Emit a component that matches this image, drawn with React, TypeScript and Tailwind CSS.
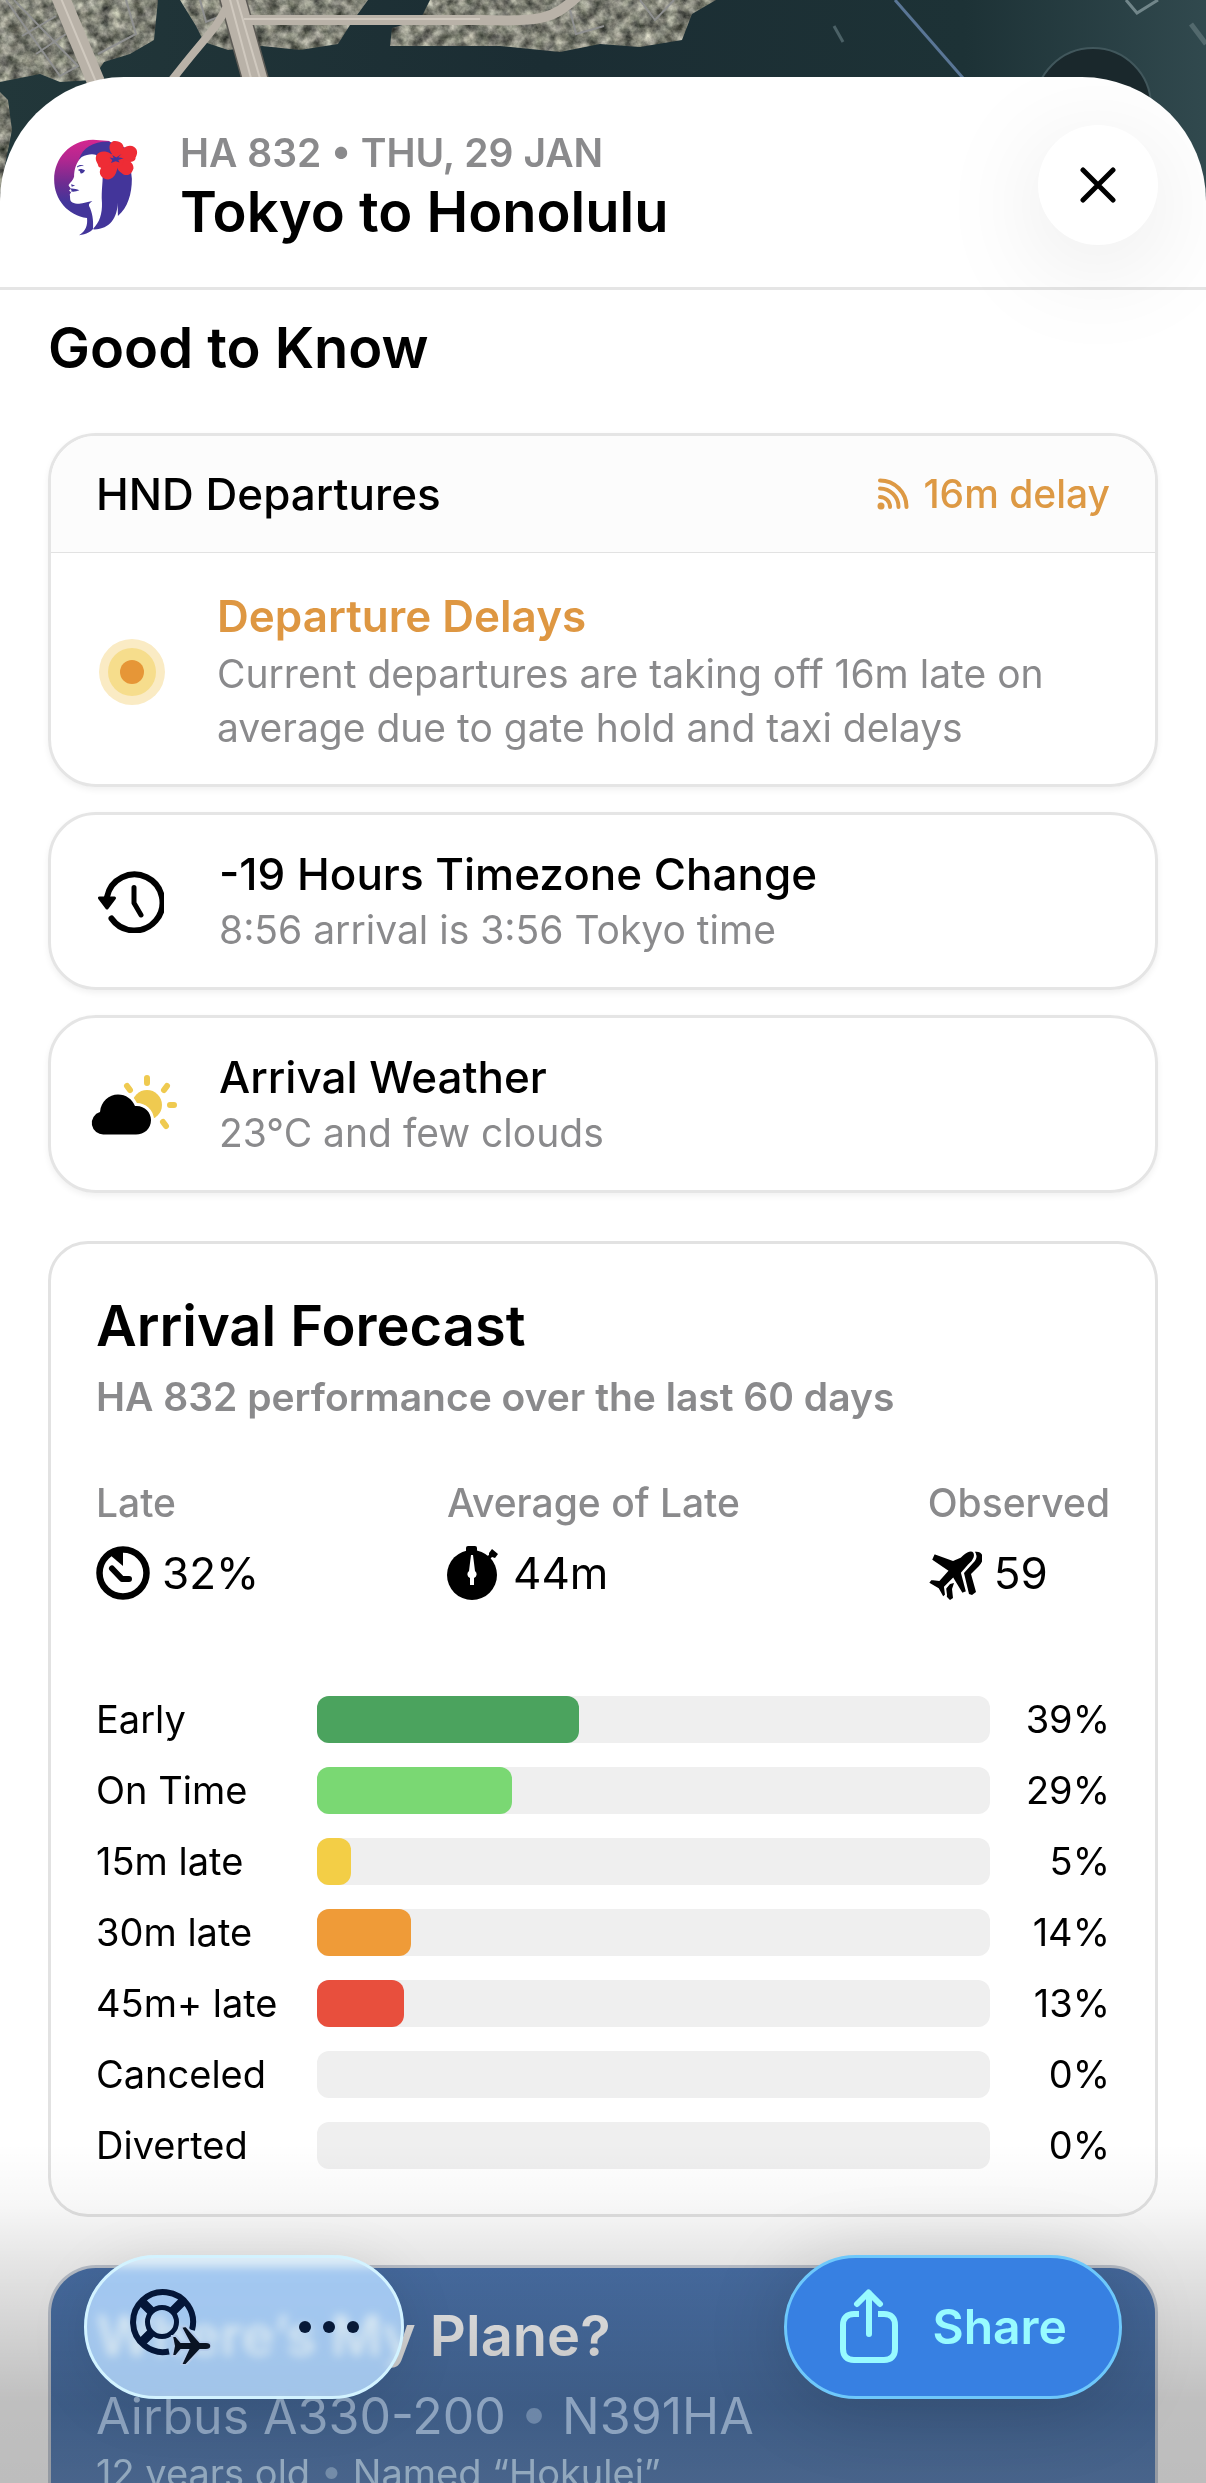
import type { ReactNode } from 'react';

const forecast = [
  { label: 'Early', value: 39, color: 'bg-[#4ba35e]' },
  { label: 'On Time', value: 29, color: 'bg-[#7ad873]' },
  { label: '15m late', value: 5, color: 'bg-[#f3ce46]' },
  { label: '30m late', value: 14, color: 'bg-[#ef9b38]' },
  { label: '45m+ late', value: 13, color: 'bg-[#e84f3d]' },
  { label: 'Canceled', value: 0, color: 'bg-[#efefef]' },
  { label: 'Diverted', value: 0, color: 'bg-[#efefef]' },
];

function MapBackdrop() {
  return (
    <svg
      className="absolute inset-x-0 top-0 h-[260px] w-full"
      viewBox="0 0 1206 260"
      preserveAspectRatio="none"
      aria-hidden="true"
    >
      <defs>
        <linearGradient id="water" x1="0" x2="1" y1="0" y2="0">
          <stop offset="0" stopColor="#22373a" />
          <stop offset="0.45" stopColor="#1b2d33" />
          <stop offset="0.8" stopColor="#1d3236" />
          <stop offset="1" stopColor="#31494e" />
        </linearGradient>
        {/* speckled rooftops */}
        <filter id="city" x="0" y="0" width="1" height="1" colorInterpolationFilters="sRGB">
          <feTurbulence type="fractalNoise" baseFrequency="0.09" numOctaves="4" seed="7" />
          <feColorMatrix values="0.9 0 0 0 0.05  0.88 0.03 0 0 0.05  0.82 0 0.04 0 0.03  0 0 0 0 1" />
          <feComposite in2="SourceGraphic" operator="in" />
        </filter>
      </defs>
      <rect width="1206" height="260" fill="url(#water)" />
      <g filter="url(#city)">
        <path d="M0 0H158L154 40 130 54 104 62 92 80 60 82 40 74 0 82Z" />
        <path d="M180 0H368L352 22 338 44 300 50 262 46 228 50 204 42 196 26Z" />
        <path d="M430 0H716L692 14 682 40 640 47 600 44 560 52 500 46 390 46 392 28 420 20Z" />
        <path d="M0 92 8 100 12 130 0 190Z" />
        <path d="M0 160 6 170 0 240Z" />
      </g>
      <g fill="none" stroke="#8f9090" strokeWidth="2">
        <path d="M6 0 60 76 78 66 14 0M22 36 56 16M36 54 66 34M126 0 136 34 98 54M200 0 206 22 226 14M570 10 576 34 604 26M640 0 655 20 674 0" />
      </g>
      <path d="M232-4 256 82" fill="none" stroke="#5c5a55" strokeWidth="27" />
      <g fill="none" stroke="#b9b2a8">
        <path d="M60-4 96 82" strokeWidth="18" />
        <path d="M226 8C216 30 204 38 172 80" strokeWidth="8" />
        <path d="M232-4 256 82" strokeWidth="24" />
        <path d="M244 20H480C540 22 552 20 578-4" strokeWidth="10" />
      </g>
      <g fill="none" stroke="#d0c9bf" strokeWidth="2">
        <path d="M60-4 96 82M229-4 252 82M236-4 261 82M244 19H480" />
      </g>
      <path d="M895 0 963 78" stroke="#5a7696" strokeWidth="3" />
      <path d="M1126 0 1137 13 1158 0" fill="none" stroke="#71868a" strokeWidth="3" />
      <path d="M834 26 843 42" stroke="#4b6166" strokeWidth="3" />
      <path d="M1191 24 1206 44" stroke="#53696d" strokeWidth="5" />
      <circle cx="1093" cy="106" r="58" fill="#1a282c" stroke="#41575c" strokeWidth="2" />
    </svg>
  );
}

function AirlineLogo() {
  return (
    <svg className="h-[97px] w-[85px] shrink-0" viewBox="70 60 255 292" role="img" aria-label="Hawaiian Airlines">
      <defs>
        <linearGradient id="pualani" x1="0" x2="0" y1="0" y2="1">
          <stop offset="0" stopColor="#d4268f" />
          <stop offset="0.2" stopColor="#b32790" />
          <stop offset="0.45" stopColor="#6f2c91" />
          <stop offset="0.65" stopColor="#43359a" />
        </linearGradient>
      </defs>
      <path
        fill="url(#pualani)"
        d="M190 62C120 64 73 118 73 182c0 62 42 108 99 116 2 22-3 38-24 52 22-3 38-11 46-24l50-120-4-140Z"
      />
      <path
        fill="#43359a"
        d="M240 68c-46-2-82 18-92 54 20-14 44-16 62-8l8 70c-4 50 2 100-28 148 50 2 74-36 74-80l1 40c30-26 42-66 42-112l-10-90Z"
      />
      <path
        fill="#fff"
        d="M156 114c16-8 32-10 44-6 2 12 10 30 18 44 4 34-4 60-1 100 1 32-7 60-27 78 2-24-2-50-12-68-2-6 4-10 10-15-14 2-26 8-40 8-16 0-28-4-27-18 0-6-1-8-1-11l4-5-6-6 5-5c-2-5-8-8-6-12 4-6 14-14 16-24 0-22 6-44 23-60Z"
      />
      <path fill="#43359a" d="M142 143c6-6 14-6 22-1-8-1-14 0-22 4ZM144 153c8-4 14-3 22 2-4 6-8 10-13 9l-3-8ZM121 210c8-2 18 1 28 4-9 4-20 6-26 3l3-3ZM124 196l12 4-10 4Z" />
      <g fill="#ee2c35">
        <path d="M262 118C232 98 236 72 252 66c20-2 34 10 30 28 4 14-6 24-20 24Z" />
        <path d="M264 118c10-34 34-44 50-34 14 10 8 24 4 32 2 16-30 20-54 2Z" />
        <path d="M262 122c32-4 50 8 50 26-6 22-24 26-36 14-14-6-18-24-14-40Z" />
        <path d="M260 122c10 30-4 58-24 60-18 0-30-16-24-30 6-18 26-26 48-30Z" />
        <path d="M258 120c-20 28-44 32-52 22 0-8-12-16-6-32 10-20 44-16 58 10Z" />
        <circle cx="261" cy="122" r="22" />
      </g>
      <path fill="#43359a" d="m276 105-10 10 16 3-16 5 4 8-12-4-14 5 4-8-8-8 12 2-4-10 12 8Z" />
    </svg>
  );
}

function CloseIcon() {
  return (
    <svg className="size-9" viewBox="0 0 36 36" fill="none" stroke="#000" strokeWidth="5" strokeLinecap="round" aria-hidden="true">
      <path d="M3 3 33 33M33 3 3 33" />
    </svg>
  );
}

function SignalIcon() {
  return (
    <svg className="size-8" viewBox="0 0 32 32" fill="none" stroke="currentColor" strokeWidth="4" strokeLinecap="round" aria-hidden="true">
      <circle cx="4" cy="28" r="3.500" fill="currentColor" stroke="none" />
      <path d="M3 19A10 10 0 0 1 13 29M3 10.500A18.500 18.500 0 0 1 21.500 29M3 2.500A26.500 26.500 0 0 1 29.500 29" />
    </svg>
  );
}

function PulseIcon() {
  return (
    <svg className="size-[66px]" viewBox="0 0 66 66" aria-hidden="true">
      <circle cx="33" cy="33" r="33" fill="#faebc4" />
      <circle cx="33" cy="33" r="24" fill="#f6dd8c" />
      <circle cx="33" cy="33" r="12" fill="#e69637" />
    </svg>
  );
}

function TimezoneIcon() {
  return (
    <svg className="h-[62px] w-[66px]" viewBox="0 0 66 62" fill="none" stroke="#000" strokeLinecap="round" strokeLinejoin="round" aria-hidden="true">
      <path d="M9 26A28 28 0 1 1 13.500 47.500" strokeWidth="6" />
      <path d="M36 16.500V32L43 44" strokeWidth="5" />
      <path d="M1.500 27H16.500L9 37Z" fill="#000" strokeWidth="3" />
    </svg>
  );
}

function WeatherIcon() {
  return (
    <svg className="h-[62px] w-24" viewBox="-8 0 96 62" aria-hidden="true">
      <g stroke="#efca50" strokeWidth="6" strokeLinecap="round">
        <path d="M56 4V9M36 12 39 16M76 12 73 16M79 31H83M72 48 75 52" />
      </g>
      <circle cx="56" cy="31" r="15" fill="#efca50" />
      <path
        d="M13 60.500a12 12 0 0 1-3-22.500C11 27 19 20 27 20c8 0 14 5 17 12 9-1 16 6 16 14 0 9-7 14.500-15 14.500Z"
        stroke="#fff"
        strokeWidth="6"
      />
      <path d="M13 60.500a11.500 11.500 0 0 1-4-22.500C10 27 18 20.500 27 20.500c8 0 14 4.500 17 11.500 9-1 16 6 16 14 0 9-7 14.500-15 14.500Z" />
    </svg>
  );
}

function LateIcon() {
  return (
    <svg className="size-[54px]" viewBox="0 0 54 54" fill="none" stroke="#000" aria-hidden="true">
      <circle cx="27" cy="27" r="23.500" strokeWidth="6.500" />
      <path d="M27 4V20L14 9Z" fill="#000" stroke="none" />
      <path d="M16 22.500 26 33H33" strokeWidth="6" strokeLinecap="round" strokeLinejoin="round" />
    </svg>
  );
}

function StopwatchIcon() {
  return (
    <svg className="size-[54px]" viewBox="0 0 54 54" aria-hidden="true">
      <circle cx="25" cy="29" r="25" />
      <rect x="19" y="0" width="11" height="7" rx="2" />
      <path d="m42 7 3-4 6 5-3 4-3-1-3 3-3-3 3-2Z" />
      <path d="M24 9h2l2 16a4 4 0 0 1-1 7v7h-4v-7a4 4 0 0 1-1-7Z" fill="#fff" />
    </svg>
  );
}

function PlanesIcon() {
  return (
    <svg className="size-[54px]" viewBox="0 0 54 54" aria-hidden="true">
      <path d="M46 6C56 4 57 14 51 20L43 28 48 46 44 49 41 48 36 27 45 17C49 13 50 9 46 6Z" />
      <path d="M26 37 24 43 25 52 22 54 19 51 17 44 22 38Z" />
      <path
        stroke="#fff"
        strokeWidth="2"
        d="M32 11c7-7 12-8 14-5 2 3 1 8-5 13l-7 8 5 19-5 2-9-15-8 8 1 8-3 3-5-9-10-6 3-4 8 1 8-9L3 14l3-7 19 7Z"
      />
    </svg>
  );
}

function SupportIcon() {
  return (
    <svg className="h-[76px] w-[82px]" viewBox="0 0 82 76" fill="none" stroke="#041638" aria-hidden="true">
      <path d="M63 41A30 30 0 1 0 40 62.500" strokeWidth="6" />
      <circle cx="33" cy="33" r="14.500" strokeWidth="5" />
      <path d="M12 12 23 23M54 12 43 23M12 54 23 43" strokeWidth="9" />
      <path
        fill="#0a1322"
        stroke="#b4cbea"
        strokeWidth="2"
        d="M43 47h4l5 6h8l-8-15 5-1 14 16h6c7 0 7 8 0 8h-6L57 76h-5l7-15h-7l-5 6h-4l2-10Z"
      />
    </svg>
  );
}

function ShareIcon() {
  return (
    <svg className="h-[76px] w-[60px]" viewBox="0 0 60 76" fill="none" stroke="currentColor" strokeWidth="6" aria-hidden="true">
      <path d="M20 25H15C8 25 4 29 4 36V60C4 67 8 71 15 71H45C52 71 56 67 56 60V36C56 29 52 25 45 25H39" />
      <path d="M30 45V4M18 15 29.500 3.500 41 15" strokeLinecap="round" strokeLinejoin="round" />
    </svg>
  );
}

function InfoCard({ icon, title, text }: { icon: ReactNode; title: string; text: string }) {
  return (
    <article className="flex items-center rounded-[48px] border-[3px] border-[#e5e5e5] pt-8 pb-[30px] shadow-[0_3px_6px_rgba(0,0,0,0.06)]">
      <div className="flex w-[168px] shrink-0 justify-center pr-2">{icon}</div>
      <div>
        <h3 className="text-[44px] leading-[54px] font-medium">{title}</h3>
        <p className="mt-0.5 text-[39px] leading-[54px] text-[#8a8a8c]">{text}</p>
      </div>
    </article>
  );
}

function Stat({ label, value, icon }: { label: string; value: string; icon: ReactNode }) {
  return (
    <div>
      <dt className="text-[39px] leading-[54px] font-medium text-[#8a8a8c]">{label}</dt>
      <dd className="mt-4 flex items-center gap-3 text-[44px] leading-[54px]">
        {icon}
        {value}
      </dd>
    </div>
  );
}

function ArrivalForecast() {
  return (
    <section className="mt-12 rounded-[40px] border-[3px] border-[#e2e2e2] px-[45px] pt-12 pb-[33px]">
      <h2 className="text-[56px] leading-[68px] font-semibold">Arrival Forecast</h2>
      <p className="mt-2.5 text-[39px] leading-[54px] font-semibold text-[#8a8a8c]">
        HA 832 performance over the last 60 days
      </p>

      <dl className="mt-[52px] flex justify-between">
        <Stat label="Late" value="32%" icon={<LateIcon />} />
        <Stat label="Average of Late" value="44m" icon={<StopwatchIcon />} />
        <Stat label="Observed" value="59" icon={<PlanesIcon />} />
      </dl>

      <table className="mt-[84px] w-full table-fixed text-[38px] leading-[47px]">
        <colgroup>
          <col className="w-[221px]" />
          <col />
          <col className="w-[120px]" />
        </colgroup>
        <tbody>
          {forecast.map((row) => (
            <tr key={row.label} className="h-[71px]">
              <th scope="row" className="p-0 text-left font-normal whitespace-nowrap">{row.label}</th>
              <td className="p-0">
                <div className="h-[47px] rounded-xl bg-[#efefef]">
                  <div className={`h-full rounded-xl ${row.color}`} style={{ width: `${row.value}%` }} />
                </div>
              </td>
              <td className="p-0 text-right">{row.value}%</td>
            </tr>
          ))}
        </tbody>
      </table>
    </section>
  );
}

function PlaneCard() {
  return (
    <section className="mt-12 rounded-t-[48px] border-[3px] border-b-0 border-[#c8cfda] bg-[linear-gradient(to_bottom,#4c74ad_0px,#527bb3_140px,#6388bc_220px)] px-[45px] pt-[34px] pb-40">
      <h2 className="text-[56px] leading-[68px] font-semibold text-white">Where’s My Plane?</h2>
      <p className="mt-4 text-[50px] leading-[60px] text-[#bcdaff]">
        Airbus A330-200 <span className="opacity-60">•</span> N391HA
      </p>
      <p className="text-[38px] leading-[54px] text-[#c4e2ff]">
        12 years old <span className="opacity-60">•</span> Named “Hokulei”
      </p>
    </section>
  );
}

function ActionBar() {
  return (
    <div className="absolute inset-x-0 bottom-0">
      <div
        className="h-[340px] bg-[linear-gradient(to_bottom,rgba(0,0,0,0)_0%,rgba(0,0,0,0.03)_18%,rgba(0,0,0,0.1)_35%,rgba(0,0,0,0.18)_57%,rgba(0,0,0,0.25)_76%,rgba(0,0,0,0.26)_100%)]"
        aria-hidden="true"
      />
      <div className="absolute inset-x-[84px] bottom-[84px] flex items-center justify-between">
        <div className="flex h-36 items-center rounded-full border-[3px] border-[#d3f3ff] bg-[#d9f0ff]/70 px-[42px] shadow-[0_8px_60px_rgba(0,0,0,0.1)] backdrop-blur-[5px] backdrop-saturate-200">
          <button type="button" aria-label="Support">
            <SupportIcon />
          </button>
          <button type="button" aria-label="More" className="ml-[88px] flex gap-3 py-8">
            <span className="size-3 rounded-full bg-[#081a38]" />
            <span className="size-3 rounded-full bg-[#081a38]" />
            <span className="size-3 rounded-full bg-[#081a38]" />
          </button>
        </div>
        <button
          type="button"
          className="flex h-36 items-center gap-[33px] rounded-full border-[3px] border-[#6ec8fb] bg-[#3780e2] px-[52px] text-[48px] leading-[60px] font-semibold text-[#98fbff] shadow-[0_8px_80px_rgba(0,0,0,0.18)]"
        >
          <ShareIcon />
          Share
        </button>
      </div>
    </div>
  );
}

export default function App() {
  return (
    <div className="relative flex h-screen flex-col overflow-hidden bg-white pt-[77px] font-['Inter',sans-serif] text-black">
      <MapBackdrop />

      <main className="relative min-h-0 flex-1 overflow-hidden rounded-t-[124px] bg-white">
        <header className="flex items-start border-b-[3px] border-[#e5e5e5] pt-12 pr-12 pb-[42px] pl-[53px]">
          <div className="flex h-[120px] flex-1 items-center gap-[42px] pt-1">
            <AirlineLogo />
            <div>
              <p className="text-[39px] leading-[50px] font-semibold text-[#8a8a8c]">HA 832 • THU, 29 JAN</p>
              <h1 className="text-[56px] leading-[68px] font-semibold">Tokyo to Honolulu</h1>
            </div>
          </div>
          <button
            type="button"
            aria-label="Close"
            className="flex size-[120px] items-center justify-center rounded-full bg-white shadow-[0_20px_110px_rgba(0,0,0,0.1)]"
          >
            <CloseIcon />
          </button>
        </header>

        <div className="px-12">
          <h2 className="mt-6 mb-[51px] text-[56px] leading-[68px] font-semibold">Good to Know</h2>

          <div className="flex flex-col gap-[25px]">
            <article className="overflow-hidden rounded-[48px] border-[3px] border-[#e5e5e5] shadow-[0_3px_6px_rgba(0,0,0,0.06)]">
              <div className="flex h-[117px] items-center justify-between border-b border-[#e2e2e2] bg-[#fcfcfc] px-[45px]">
                <h3 className="text-[44px] leading-[54px] font-medium">HND Departures</h3>
                <p className="flex items-center gap-3.5 text-[39px] leading-[54px] font-medium text-[#dd9944]">
                  <SignalIcon />
                  16m delay
                </p>
              </div>
              <div className="flex items-center pt-9 pb-[29px]">
                <div className="flex w-[166px] shrink-0 justify-center pr-1">
                  <PulseIcon />
                </div>
                <div className="pr-[45px]">
                  <h4 className="text-[44px] leading-[54px] font-semibold text-[#de9742]">Departure Delays</h4>
                  <p className="mt-1 text-[39px] leading-[54px] text-[#8a8a8c]">
                    Current departures are taking off 16m late on average due to gate hold and taxi delays
                  </p>
                </div>
              </div>
            </article>
            <InfoCard icon={<TimezoneIcon />} title="-19 Hours Timezone Change" text="8:56 arrival is 3:56 Tokyo time" />
            <InfoCard icon={<WeatherIcon />} title="Arrival Weather" text="23°C and few clouds" />
          </div>

          <ArrivalForecast />
          <PlaneCard />
        </div>
      </main>

      <ActionBar />
    </div>
  );
}
